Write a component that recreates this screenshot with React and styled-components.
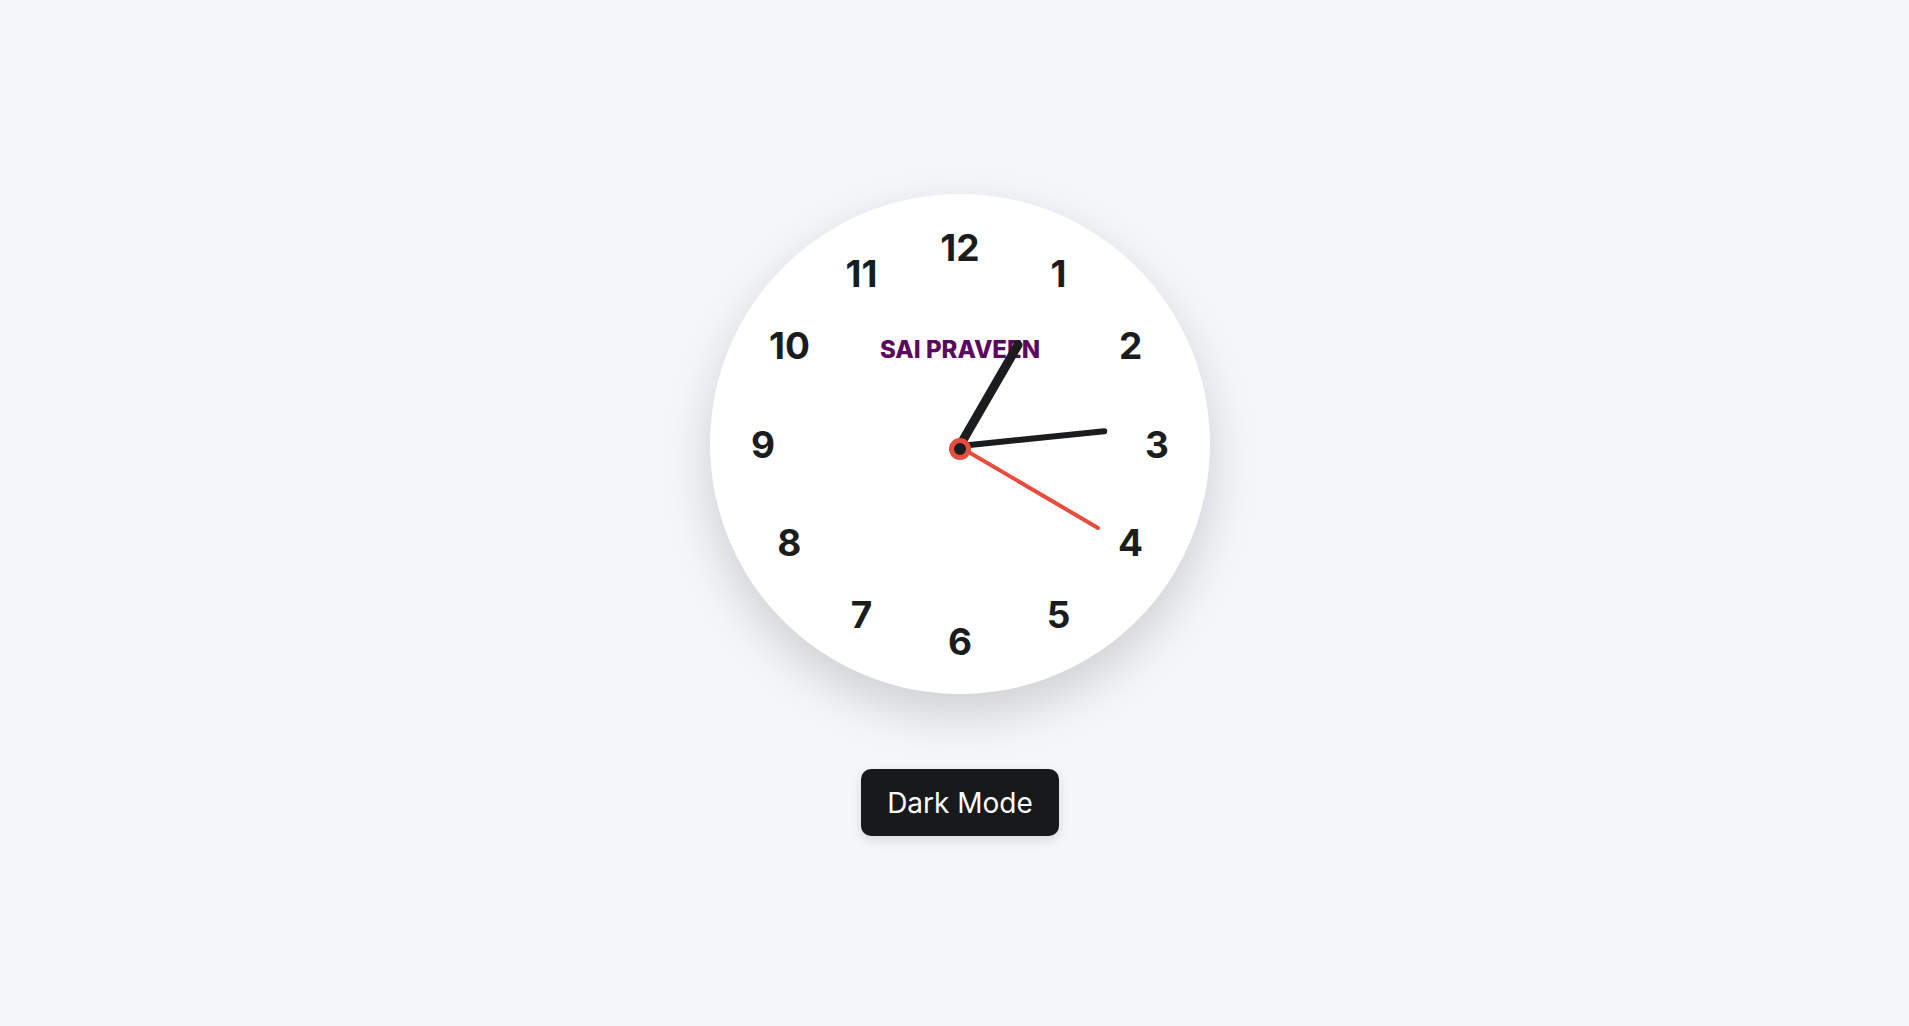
import React from "react";
import styled, { createGlobalStyle } from "styled-components";

const GlobalStyle = createGlobalStyle`
  html, body {
    margin: 0;
    padding: 0;
    background: #f5f6fa;
    font-family: Inter, "Noto Sans", sans-serif;
  }
`;

const Page = styled.main`
  min-height: 100vh;
  box-sizing: border-box;
  display: flex;
  flex-direction: column;
  align-items: center;
  padding: 194px 0 0 11px;
  gap: 75px;
`;

const Face = styled.div`
  position: relative;
  width: 500px;
  height: 500px;
  border-radius: 50%;
  background: #ffffff;
  box-shadow: 0 20px 50px rgba(0, 0, 0, 0.16);
`;

const Numeral = styled.span`
  position: absolute;
  width: 60px;
  height: 40px;
  margin: -20px 0 0 -30px;
  display: flex;
  align-items: center;
  justify-content: center;
  font-size: 37px;
  line-height: 1;
  font-weight: 700;
  color: #1b1c1e;
`;

const Brand = styled.div`
  position: absolute;
  left: 0;
  right: 0;
  top: 141px;
  text-align: center;
  font-size: 24px;
  line-height: 29px;
  font-weight: 800;
  color: #5a0a5e;
`;

const Hand = styled.div`
  position: absolute;
  left: ${(p) => 250 - p.$w / 2}px;
  top: ${(p) => 255 - p.$len}px;
  width: ${(p) => p.$w}px;
  height: ${(p) => p.$len}px;
  border-radius: ${(p) => p.$w}px;
  background: ${(p) => p.$color};
  transform-origin: 50% calc(100% - ${(p) => p.$w / 2}px);
  transform: rotate(${(p) => p.$deg}deg);
`;

const Pivot = styled.div`
  position: absolute;
  left: 250px;
  top: 255px;
  width: 12px;
  height: 12px;
  margin: -11px 0 0 -11px;
  border-radius: 50%;
  background: #1b1c1e;
  border: 5px solid #e74c3c;
`;

const ModeButton = styled.button`
  height: 67px;
  padding: 0 26px;
  border: none;
  border-radius: 10px;
  background: #18191b;
  color: #ffffff;
  font-family: Inter, "Noto Sans", sans-serif;
  font-size: 28px;
  font-weight: 400;
  box-shadow: 0 4px 12px rgba(0, 0, 0, 0.12);
  cursor: pointer;
`;

const R = 197;

export default function App() {
  const nums = Array.from({ length: 12 }, (_, i) => i + 1);
  return (
    <>
      <GlobalStyle />
      <Page>
        <Face>
          {nums.map((n) => {
            const a = (n * 30 * Math.PI) / 180;
            return (
              <Numeral
                key={n}
                style={{ left: 250 + R * Math.sin(a), top: 250 - R * Math.cos(a) }}
              >
                {n}
              </Numeral>
            );
          })}
          <Brand>SAI PRAVEEN</Brand>
          <Hand $w={9} $len={124} $deg={30} $color="#1b1c1e" />
          <Hand $w={6} $len={151} $deg={84.2} $color="#1b1c1e" />
          <Hand $w={4} $len={164} $deg={120.4} $color="#e74c3c" />
          <Pivot />
        </Face>
        <ModeButton>Dark Mode</ModeButton>
      </Page>
    </>
  );
}
